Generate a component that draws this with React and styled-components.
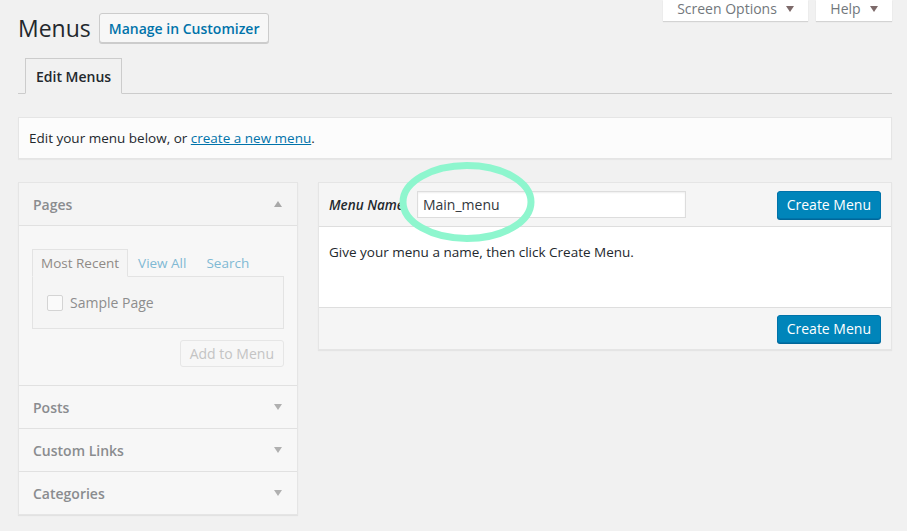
import React from 'react';
import styled, { createGlobalStyle } from 'styled-components';

const GlobalStyle = createGlobalStyle`
	body {
		margin: 0;
		background: #f1f1f1;
		font-family: 'Open Sans', 'Noto Sans', sans-serif;
		color: #23282d;
		font-size: 13.5px;
	}
`;

const Page = styled.div`
	padding: 0 15px 20px 18px;
`;

const TopRow = styled.div`
	display: flex;
	justify-content: space-between;
	align-items: flex-start;
`;

const TitleGroup = styled.div`
	display: flex;
	align-items: center;
	gap: 8px;
	padding-top: 13px;
`;

const Title = styled.h1`
	margin: 0;
	font-size: 23px;
	font-weight: 400;
	line-height: 30px;
	color: #23282d;
`;

const OutlineButton = styled.a`
	display: inline-flex;
	align-items: center;
	height: 28px;
	padding: 0 9px;
	border: 1px solid #ccc;
	border-radius: 3px;
	background: #f7f7f7;
	box-shadow: 0 1px 0 #ccc;
	color: #0073aa;
	font-size: 14px;
	font-weight: 600;
	text-decoration: none;
`;

const MetaLinks = styled.div`
	display: flex;
	gap: 8px;
`;

const MetaTab = styled.div`
	display: flex;
	align-items: center;
	gap: 9px;
	width: ${(p) => p.w}px;
	box-sizing: border-box;
	justify-content: center;
	height: 21px;
	padding-bottom: 3px;
	background: #fff;
	box-shadow: 0 1px 1px rgba(0, 0, 0, 0.12);
	color: #72777c;
	font-size: 14px;
	line-height: 18px;
`;

const DownCaret = styled.span`
	width: 0;
	height: 0;
	border-left: 4px solid transparent;
	border-right: 4px solid transparent;
	border-top: 6px solid ${(p) => p.color || '#7d6a6a'};
`;

const UpCaret = styled.span`
	width: 0;
	height: 0;
	border-left: 4px solid transparent;
	border-right: 4px solid transparent;
	border-bottom: 6px solid #a8a8a8;
`;

const NavTabs = styled.div`
	display: flex;
	margin-top: 15px;
	padding-left: 7px;
	border-bottom: 1px solid #ccc;
`;

const NavTab = styled.div`
	margin-bottom: -1px;
	padding: 0 10px;
	height: 34px;
	display: flex;
	align-items: center;
	border: 1px solid #ccc;
	border-bottom-color: #f1f1f1;
	background: #f1f1f1;
	font-size: 14px;
	font-weight: 600;
	color: #23282d;
`;

const Notice = styled.div`
	margin-top: 23px;
	height: 42px;
	box-sizing: border-box;
	display: flex;
	align-items: center;
	padding: 0 10px;
	background: #fcfcfc;
	border: 1px solid #e5e5e5;
	box-shadow: 0 1px 1px rgba(0, 0, 0, 0.04);
	font-size: 13.5px;

	a {
		color: #0073aa;
		text-decoration: underline;
	}
`;

const Columns = styled.div`
	display: flex;
	gap: 20px;
	align-items: flex-start;
	margin-top: 23px;
`;

const SideColumn = styled.div`
	width: 280px;
	flex-shrink: 0;
	box-sizing: border-box;
	border: 1px solid #e5e5e5;
	box-shadow: 0 1px 1px rgba(0, 0, 0, 0.06);
	background: #f7f7f7;
`;

const Section = styled.div`
	border-bottom: 1px solid #e1e1e1;
	&:last-child {
		border-bottom: none;
	}
`;

const SectionTitle = styled.div`
	height: 42px;
	display: flex;
	align-items: center;
	justify-content: space-between;
	padding: 0 15px 0 14px;
	font-size: 14px;
	font-weight: 600;
	color: #8a8c8f;
	border-bottom: ${(p) => (p.open ? '1px solid #e1e1e1' : 'none')};
	background: ${(p) => (p.open ? '#f4f4f4' : 'transparent')};
`;

const SectionBody = styled.div`
	padding: 23px 13px 18px 13px;
	display: flex;
	flex-direction: column;
`;

const MiniTabs = styled.div`
	display: flex;
	align-items: flex-end;
	font-size: 13.5px;
`;

const MiniTab = styled.div`
	height: 28px;
	box-sizing: border-box;
	display: flex;
	align-items: center;
	padding: 0 ${(p) => (p.active ? '8px' : '9px')};
	margin-bottom: -1px;
	border: 1px solid ${(p) => (p.active ? '#e3e3e3' : 'transparent')};
	border-bottom-color: ${(p) => (p.active ? '#f5f5f5' : 'transparent')};
	background: ${(p) => (p.active ? '#f5f5f5' : 'transparent')};
	color: ${(p) => (p.active ? '#8f8a86' : '#7fb9d4')};
	position: relative;
`;

const TabPanel = styled.div`
	height: 53px;
	box-sizing: border-box;
	border: 1px solid #e3e3e3;
	background: #f5f5f5;
	display: flex;
	align-items: center;
	padding-left: 14px;
	gap: 7px;
	font-size: 14px;
	color: #8d8d8d;
`;

const Check = styled.span`
	width: 14px;
	height: 14px;
	border: 1px solid #d4d4d4;
	border-radius: 2px;
	background: #fafafa;
`;

const AddButton = styled.div`
	align-self: flex-end;
	margin-top: 11px;
	height: 27px;
	box-sizing: border-box;
	padding: 0 9px;
	display: flex;
	align-items: center;
	border: 1px solid #e6e6e6;
	border-radius: 3px;
	background: #f7f7f7;
	color: #c4c4c4;
	font-size: 14px;
`;

const MainPanel = styled.div`
	flex: 1;
	border: 1px solid #e5e5e5;
	box-shadow: 0 1px 1px rgba(0, 0, 0, 0.05);
	background: #f5f5f5;
`;

const PanelHeader = styled.div`
	height: 44px;
	box-sizing: border-box;
	display: flex;
	align-items: center;
	justify-content: space-between;
	padding: 0 10px;
	border-bottom: 1px solid #dedede;
`;

const NameField = styled.div`
	display: flex;
	align-items: center;
	gap: 13px;
`;

const Label = styled.label`
	font-style: italic;
	font-weight: 600;
	font-size: 13.5px;
	color: #23282d;
`;

const InputWrap = styled.div`
	position: relative;
`;

const TextInput = styled.div`
	width: 269px;
	height: 27px;
	box-sizing: border-box;
	padding: 0 5px;
	display: flex;
	align-items: center;
	border: 1px solid #ddd;
	background: #fff;
	box-shadow: inset 0 1px 2px rgba(0, 0, 0, 0.07);
	font-size: 14px;
	color: #32373c;
`;

const Highlight = styled.svg`
	position: absolute;
	left: -18px;
	top: -29px;
	pointer-events: none;
`;

const PrimaryButton = styled.div`
	height: 28px;
	box-sizing: border-box;
	padding: 0 9px;
	display: flex;
	align-items: center;
	background: #0085ba;
	border: 1px solid #0073aa;
	border-radius: 3px;
	box-shadow: 0 1px 0 #006799;
	color: #fff;
	font-size: 14px;
`;

const PanelBody = styled.div`
	height: 80px;
	box-sizing: border-box;
	padding: 16px 10px;
	background: #fff;
	font-size: 13.5px;
`;

const PanelFooter = styled.div`
	height: 41px;
	display: flex;
	align-items: center;
	justify-content: flex-end;
	padding: 0 10px;
	border-top: 1px solid #dedede;
`;

const closedSections = ['Posts', 'Custom Links', 'Categories'];

const App = () => {
	return (
		<Page>
			<GlobalStyle />
			<TopRow>
				<TitleGroup>
					<Title>Menus</Title>
					<OutlineButton href='#'>Manage in Customizer</OutlineButton>
				</TitleGroup>
				<MetaLinks>
					<MetaTab w={145}>
						Screen Options <DownCaret />
					</MetaTab>
					<MetaTab w={76}>
						Help <DownCaret />
					</MetaTab>
				</MetaLinks>
			</TopRow>

			<NavTabs>
				<NavTab>Edit Menus</NavTab>
			</NavTabs>

			<Notice>
				<span>
					Edit your menu below, or <a href='#'>create a new menu</a>.
				</span>
			</Notice>

			<Columns>
				<SideColumn>
					<Section>
						<SectionTitle open>
							Pages <UpCaret />
						</SectionTitle>
						<SectionBody>
							<MiniTabs>
								<MiniTab active>Most Recent</MiniTab>
								<MiniTab>View All</MiniTab>
								<MiniTab>Search</MiniTab>
							</MiniTabs>
							<TabPanel>
								<Check />
								Sample Page
							</TabPanel>
							<AddButton>Add to Menu</AddButton>
						</SectionBody>
					</Section>
					{closedSections.map((name) => (
						<Section key={name}>
							<SectionTitle>
								{name} <DownCaret color='#b0b0b0' />
							</SectionTitle>
						</Section>
					))}
				</SideColumn>

				<MainPanel>
					<PanelHeader>
						<NameField>
							<Label>Menu Name</Label>
							<InputWrap>
								<TextInput>Main_menu</TextInput>
								<Highlight width='136' height='80' viewBox='0 0 136 80'>
									<ellipse
										cx='68'
										cy='40'
										rx='64'
										ry='36.5'
										fill='none'
										stroke='#8ef6ce'
										strokeWidth='7'
									/>
								</Highlight>
							</InputWrap>
						</NameField>
						<PrimaryButton>Create Menu</PrimaryButton>
					</PanelHeader>
					<PanelBody>Give your menu a name, then click Create Menu.</PanelBody>
					<PanelFooter>
						<PrimaryButton>Create Menu</PrimaryButton>
					</PanelFooter>
				</MainPanel>
			</Columns>
		</Page>
	);
};

export default App;
